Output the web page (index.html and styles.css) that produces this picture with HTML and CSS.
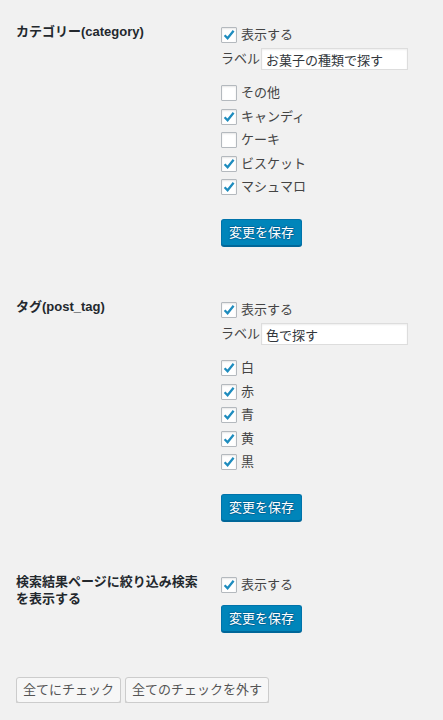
FILE: index.html
```html
<!DOCTYPE html>
<html lang="ja">
<head>
<meta charset="utf-8">
<title>設定</title>
<link rel="stylesheet" href="styles.css">
</head>
<body>
<div class="page">
  <section class="form-row">
    <div class="th">カテゴリー(category)</div>
    <div class="td">
      <label class="check-line"><span class="cb on"><svg viewBox="0 0 16 16"><path d="M3.6 8.2 L6.6 11.2 L12.6 3.8"/></svg></span>表示する</label>
      <div class="label-row"><span class="label-text">ラベル</span><input class="text-input" type="text" value="お菓子の種類で探す"></div>
      <ul class="check-list">
        <li><span class="cb"></span>その他</li>
        <li><span class="cb on"><svg viewBox="0 0 16 16"><path d="M3.6 8.2 L6.6 11.2 L12.6 3.8"/></svg></span>キャンディ</li>
        <li><span class="cb"></span>ケーキ</li>
        <li><span class="cb on"><svg viewBox="0 0 16 16"><path d="M3.6 8.2 L6.6 11.2 L12.6 3.8"/></svg></span>ビスケット</li>
        <li><span class="cb on"><svg viewBox="0 0 16 16"><path d="M3.6 8.2 L6.6 11.2 L12.6 3.8"/></svg></span>マシュマロ</li>
      </ul>
      <button class="btn-primary">変更を保存</button>
    </div>
  </section>

  <section class="form-row">
    <div class="th">タグ(post_tag)</div>
    <div class="td">
      <label class="check-line"><span class="cb on"><svg viewBox="0 0 16 16"><path d="M3.6 8.2 L6.6 11.2 L12.6 3.8"/></svg></span>表示する</label>
      <div class="label-row"><span class="label-text">ラベル</span><input class="text-input" type="text" value="色で探す"></div>
      <ul class="check-list">
        <li><span class="cb on"><svg viewBox="0 0 16 16"><path d="M3.6 8.2 L6.6 11.2 L12.6 3.8"/></svg></span>白</li>
        <li><span class="cb on"><svg viewBox="0 0 16 16"><path d="M3.6 8.2 L6.6 11.2 L12.6 3.8"/></svg></span>赤</li>
        <li><span class="cb on"><svg viewBox="0 0 16 16"><path d="M3.6 8.2 L6.6 11.2 L12.6 3.8"/></svg></span>青</li>
        <li><span class="cb on"><svg viewBox="0 0 16 16"><path d="M3.6 8.2 L6.6 11.2 L12.6 3.8"/></svg></span>黄</li>
        <li><span class="cb on"><svg viewBox="0 0 16 16"><path d="M3.6 8.2 L6.6 11.2 L12.6 3.8"/></svg></span>黒</li>
      </ul>
      <button class="btn-primary">変更を保存</button>
    </div>
  </section>

  <section class="form-row">
    <div class="th">検索結果ページに絞り込み検索を表示する</div>
    <div class="td">
      <label class="check-line"><span class="cb on"><svg viewBox="0 0 16 16"><path d="M3.6 8.2 L6.6 11.2 L12.6 3.8"/></svg></span>表示する</label>
      <button class="btn-primary btn-tight">変更を保存</button>
    </div>
  </section>

  <div class="bulk">
    <button class="btn-secondary">全てにチェック</button>
    <button class="btn-secondary">全てのチェックを外す</button>
  </div>
</div>
</body>
</html>
```

FILE: styles.css
```css
html, body {
  margin: 0;
  padding: 0;
  background: #f1f1f1;
}

body {
  font-family: "Liberation Sans", "Noto Sans CJK JP", sans-serif;
  font-size: 13px;
  color: #444;
}

.page {
  padding: 3px 0 0 16px;
}

.form-row {
  display: grid;
  grid-template-columns: 205px 1fr;
  padding: 20px 0 32px;
}

.th {
  width: 190px;
  font-weight: bold;
  line-height: 17px;
  color: #23282d;
}

.td {
  display: flex;
  flex-direction: column;
  align-items: flex-start;
}

.check-line,
.check-list li {
  display: flex;
  align-items: center;
  gap: 4px;
  height: 16px;
  line-height: 16px;
  color: #444;
}

.check-line {
  margin-top: 4px;
}

.cb {
  box-sizing: border-box;
  width: 16px;
  height: 16px;
  border: 1px solid #b4b9be;
  border-radius: 1px;
  background: #fff;
  box-shadow: inset 0 1px 2px rgba(0, 0, 0, 0.1);
  display: flex;
  align-items: center;
  justify-content: center;
  flex: none;
}

.cb svg {
  width: 16px;
  height: 16px;
  margin: -1px;
}

.cb path {
  fill: none;
  stroke: #1e8cbe;
  stroke-width: 2.3;
  stroke-linecap: butt;
  stroke-linejoin: miter;
}

.label-row {
  display: flex;
  align-items: center;
  gap: 1px;
  margin-top: 5px;
  height: 22px;
}

.label-text {
  color: #444;
  line-height: 22px;
}

.text-input {
  box-sizing: border-box;
  width: 147px;
  height: 22px;
  margin: 0;
  padding: 0 4px;
  border: 1px solid #ddd;
  background: #fff;
  box-shadow: inset 0 1px 2px rgba(0, 0, 0, 0.07);
  font: inherit;
  font-size: 13px;
  color: #32373c;
  outline: none;
}

.check-list {
  list-style: none;
  margin: 15px 0 0;
  padding: 0;
  display: flex;
  flex-direction: column;
  gap: 7.5px;
}

.btn-primary {
  box-sizing: border-box;
  margin: 24px 0 0;
  height: 27px;
  padding: 0 7px;
  border: 1px solid #0073aa;
  border-bottom-color: #006799;
  border-radius: 3px;
  background: #0085ba;
  box-shadow: 0 1px 0 #006799;
  color: #fff;
  font: inherit;
  font-size: 13px;
  line-height: 25px;
  text-shadow: 0 -1px 1px #006799, 1px 0 1px #006799, 0 1px 1px #006799, -1px 0 1px #006799;
  cursor: pointer;
}

.btn-tight {
  margin-top: 12px;
}

.bulk {
  display: flex;
  gap: 4px;
  margin-top: 13px;
}

.btn-secondary {
  box-sizing: border-box;
  margin: 0;
  height: 26px;
  padding: 0 6px;
  border: 1px solid #ccc;
  border-radius: 3px;
  background: #f7f7f7;
  box-shadow: 0 1px 0 #ccc;
  color: #555;
  font: inherit;
  font-size: 13px;
  line-height: 24px;
  cursor: pointer;
}
```
